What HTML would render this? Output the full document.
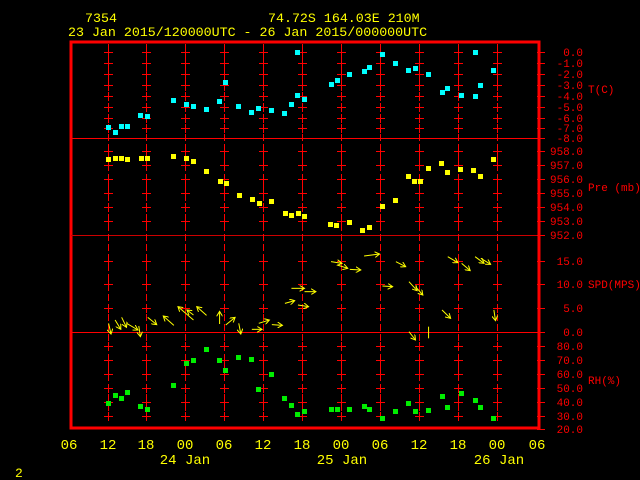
<!DOCTYPE html>
<html><head><meta charset="utf-8"><style>
html,body{margin:0;padding:0;background:#000;width:640px;height:480px;overflow:hidden}
svg{display:block}
text{font-family:"Liberation Mono",monospace}
</style></head><body>
<svg width="640" height="480" viewBox="0 0 640 480" xmlns="http://www.w3.org/2000/svg">
<defs>
<marker id="ah" markerWidth="6" markerHeight="6" refX="5" refY="3" orient="auto" markerUnits="userSpaceOnUse">
<path d="M0,0 L5,3 L0,6" fill="none" stroke="#ff0" stroke-width="1"/></marker>
</defs>
<rect width="640" height="480" fill="#000"/>
<g fill="#ff0" font-size="13.3">
<text x="85" y="22">7354</text>
<text x="268" y="22">74.72S  164.03E   210M</text>
<text x="68" y="36">23 Jan 2015/120000UTC - 26 Jan 2015/000000UTC</text>
</g>
<rect x="71" y="42" width="468" height="386" fill="none" stroke="#f00" stroke-width="3"/>
<rect x="71" y="138" width="474" height="1" fill="#f00"/>
<rect x="71" y="235" width="474" height="1" fill="#c00"/>
<rect x="71" y="332" width="474" height="1" fill="#f00"/>
<g id="grid" fill="#f00"></g>
<g fill="#f00" font-size="11" text-anchor="end">
<text x="583" y="56">0.0</text><text x="583" y="67">-1.0</text><text x="583" y="78">-2.0</text><text x="583" y="89">-3.0</text><text x="583" y="100">-4.0</text><text x="583" y="111">-5.0</text><text x="583" y="122">-6.0</text><text x="583" y="132">-7.0</text><text x="583" y="142">-8.0</text>
<text x="583" y="155">958.0</text><text x="583" y="169">957.0</text><text x="583" y="183">956.0</text><text x="583" y="197">955.0</text><text x="583" y="211">954.0</text><text x="583" y="225">953.0</text><text x="583" y="239">952.0</text>
<text x="583" y="265">15.0</text><text x="583" y="288">10.0</text><text x="583" y="312">5.0</text><text x="583" y="336">0.0</text>
<text x="583" y="350">80.0</text><text x="583" y="364">70.0</text><text x="583" y="378">60.0</text><text x="583" y="392">50.0</text><text x="583" y="406">40.0</text><text x="583" y="420">30.0</text><text x="583" y="433">20.0</text>
</g>
<g fill="#f00" font-size="11">
<text x="588" y="93">T(C)</text><text x="588" y="191">Pre (mb)</text><text x="588" y="288">SPD(MPS)</text><text x="588" y="384">RH(%)</text>
</g>
<g fill="#ff0" font-size="14" text-anchor="middle">
<text x="69" y="449">06</text><text x="108" y="449">12</text><text x="146" y="449">18</text><text x="185" y="449">00</text><text x="224" y="449">06</text><text x="263" y="449">12</text><text x="302" y="449">18</text><text x="341" y="449">00</text><text x="380" y="449">06</text><text x="419" y="449">12</text><text x="458" y="449">18</text><text x="497" y="449">00</text><text x="537" y="449">06</text>
<text x="185" y="464">24 Jan</text><text x="342" y="464">25 Jan</text><text x="499" y="464">26 Jan</text>
</g>
<text x="15" y="477" fill="#ff0" font-size="13">2</text>
<g id="pts"></g>
</svg>
<script>
var NS="http://www.w3.org/2000/svg";
function el(p,t,a){var e=document.createElementNS(NS,t);for(var k in a)e.setAttribute(k,a[k]);p.appendChild(e);return e;}
var g=document.getElementById("grid");
var cols=[108,146,185,224,263,302,341,380,419,458,497];
var ticks=[52,63,74,85,96,107,118,128,151,165,179,193,207,221,261,284,308,346,360,374,388,402,416];
cols.forEach(function(x){
 for(var y=44;y<422;y+=10){el(g,"rect",{x:x,y:y,width:1,height:7});}
 ticks.forEach(function(y){el(g,"rect",{x:x-4,y:y,width:9,height:1});el(g,"rect",{x:x,y:y-4,width:1,height:9});});
});
ticks.concat([138,235,332,429]).forEach(function(y){el(g,"rect",{x:537,y:y,width:8,height:1});});
var p=document.getElementById("pts");
var s=1/2.45, t=1/3;
var T=[[266,383],[282,398],[298,380],[313,380],[345,347],[362,350],[426,302],[458,314],[474,320],[507,329],[539,305],[553,248],[585,320],[617,338],[634,326],[666,332],[698,341],[714,314],[730,287],[746,299],[730,158],[811,254],[826,242],[857,224],[892,215],[906,203],[937,164],[970,191],[1002,212],[1018,206],[1050,224],[1083,278],[1097,266],[1131,287],[1164,290],[1178,257],[1164,158],[1210,212]];
T.forEach(function(q){el(p,"rect",{x:Math.round(q[0]*s-2.5),y:Math.round(q[1]*t-2.5),width:5,height:5,fill:"#0ff"});});
var P=[[108,159],[115,158],[121,158],[127,159],[141,158],[147,158],[173,156],[186,158],[193,161],[206,171],[220,181],[226,183],[239,195],[252,199],[259,203],[271,201],[285,213],[291,215],[298,213],[304,216],[330,224],[336,225],[349,222],[362,230],[369,227],[382,206],[395,200],[408,176],[414,181],[420,181],[428,168],[441,163],[447,172],[460,169],[473,170],[480,176],[493,159]];
P.forEach(function(q){el(p,"rect",{x:q[0]-2,y:q[1]-2,width:5,height:5,fill:"#ff0"});});
var R=[[266,521],[282,497],[298,506],[313,488],[345,530],[362,539],[426,467],[458,401],[474,392],[507,359],[539,392],[553,422],[585,383],[617,389],[634,479],[666,434],[698,506],[714,527],[730,554],[746,545],[811,539],[826,539],[857,539],[892,530],[906,539],[937,566],[970,545],[1002,521],[1018,545],[1050,542],[1083,500],[1097,533],[1131,491],[1164,512],[1178,533],[1210,566]];
R.forEach(function(q){el(p,"rect",{x:Math.round(q[0]*s-2.5),y:Math.round(230+q[1]*t-2.5),width:5,height:5,fill:"#0e0"});});
var W=[[266,280,272,312],[282,270,296,298],[298,262,310,292],[310,280,338,300],[340,288,344,320],[362,262,384,284],[426,286,400,258],[474,270,436,230],[474,255,458,240],[506,256,482,230],[538,282,538,244],[553,285,576,262],[585,280,590,312],[617,298,642,298],[634,280,660,270],[666,284,692,286],[698,220,722,212],[730,225,756,230],[714,175,746,175],[746,185,774,185],[811,95,838,100],[826,105,852,115],[857,118,884,120],[892,78,930,72],[970,95,994,110],[937,168,962,170],[1002,155,1022,182],[1018,170,1036,195],[1002,305,1018,330],[1083,240,1104,265],[1097,80,1122,98],[1131,100,1152,122],[1164,80,1186,100],[1178,85,1202,103],[1210,240,1214,272]];
W.forEach(function(w){el(p,"line",{x1:w[0]*s,y1:230+w[1]*t,x2:w[2]*s,y2:230+w[3]*t,stroke:"#ff0","stroke-width":1,"marker-end":"url(#ah)"});});
el(p,"line",{x1:1050*s,y1:230+290*t,x2:1050*s,y2:230+325*t,stroke:"#ff0","stroke-width":1});
</script>
</body></html>
